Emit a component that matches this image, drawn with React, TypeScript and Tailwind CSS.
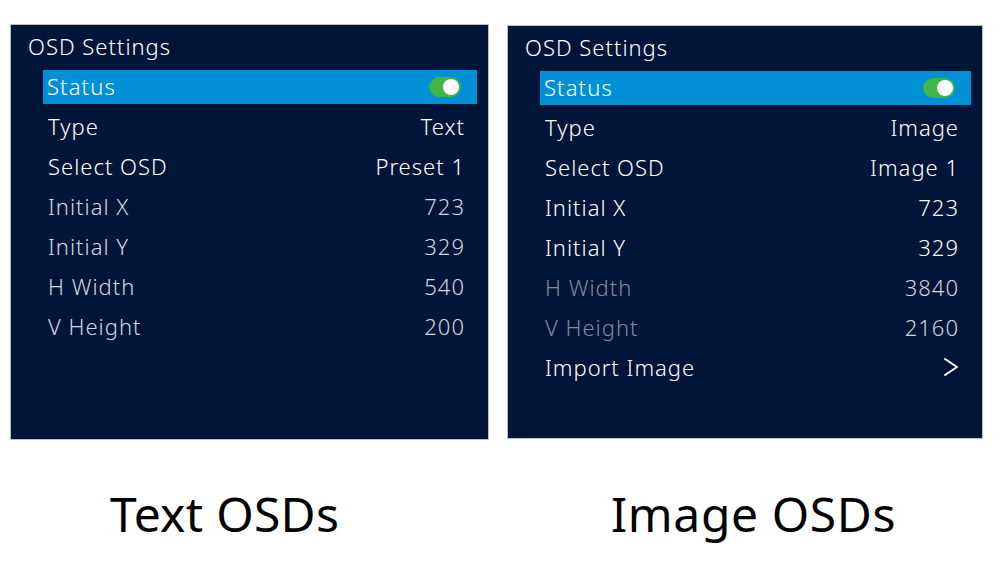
import React from "react";

type Row = { label: string; value?: string; labelColor: string; valueColor: string; chevron?: boolean };

const Toggle = () => (
  <div className="w-[32px] h-[20px] rounded-full bg-[#3fb449] flex items-center justify-end pr-[2px]">
    <div className="w-[16px] h-[16px] rounded-full bg-white" />
  </div>
);

const Chevron = () => (
  <svg width="16" height="22" viewBox="0 0 16 22" fill="none">
    <polyline points="2,3 14,11 2,19" stroke="#ffffff" strokeWidth="2" strokeLinecap="round" strokeLinejoin="round" />
  </svg>
);

function Panel({ rows, className }: { rows: Row[]; className: string }) {
  return (
    <div className={"bg-[#001537] border border-[#b9bcc2] pt-[1px] flex flex-col " + className}>
      <div className="h-[40px] flex items-center pl-[17px] text-white text-[22px] tracking-[1px] font-light">OSD Settings</div>
      <div className="ml-[32px] mr-[11px] flex flex-col">
        <div className="h-[40px] flex items-center pt-[2px]">
          <div className="h-[34px] w-full bg-[#0190d6] flex items-center justify-between pl-[4px] pr-[16px]">
            <span className="text-white text-[22px] tracking-[1.1px] font-light -mt-[1px]">Status</span>
            <Toggle />
          </div>
        </div>
        {rows.map((r) => (
          <div key={r.label} className="h-[40px] flex items-center justify-between pl-[5px] pr-[12px] text-[22px] tracking-[1px] font-light">
            <span style={{ color: r.labelColor }}>{r.label}</span>
            {r.chevron ? <Chevron /> : <span style={{ color: r.valueColor }}>{r.value}</span>}
          </div>
        ))}
      </div>
    </div>
  );
}

export default function App() {
  const W = "#ffffff";
  const G = "#d3d7de";
  const D = "#838a99";
  const leftRows: Row[] = [
    { label: "Type", value: "Text", labelColor: W, valueColor: W },
    { label: "Select OSD", value: "Preset 1", labelColor: W, valueColor: W },
    { label: "Initial X", value: "723", labelColor: G, valueColor: G },
    { label: "Initial Y", value: "329", labelColor: G, valueColor: G },
    { label: "H Width", value: "540", labelColor: G, valueColor: G },
    { label: "V Height", value: "200", labelColor: G, valueColor: G },
  ];
  const rightRows: Row[] = [
    { label: "Type", value: "Image", labelColor: W, valueColor: W },
    { label: "Select OSD", value: "Image 1", labelColor: W, valueColor: W },
    { label: "Initial X", value: "723", labelColor: W, valueColor: W },
    { label: "Initial Y", value: "329", labelColor: W, valueColor: W },
    { label: "H Width", value: "3840", labelColor: D, valueColor: G },
    { label: "V Height", value: "2160", labelColor: D, valueColor: G },
    { label: "Import Image", labelColor: W, valueColor: W, chevron: true },
  ];
  return (
    <div className="w-[1000px] h-[562px] bg-white overflow-hidden" style={{ fontFamily: '"Noto Sans", sans-serif' }}>
      <div className="flex pl-[10px] gap-[18px]">
        <div className="flex flex-col pt-[24px]">
          <Panel rows={leftRows} className="w-[479px] h-[416px]" />
          <div className="pl-[100px] pt-[46px] text-[48px] leading-[56px] tracking-[0.3px] text-black">Text OSDs</div>
        </div>
        <div className="flex flex-col pt-[25px]">
          <Panel rows={rightRows} className="w-[476px] h-[414px]" />
          <div className="pl-[104px] pt-[47px] text-[48px] leading-[56px] tracking-[0.6px] text-black">Image OSDs</div>
        </div>
      </div>
    </div>
  );
}
